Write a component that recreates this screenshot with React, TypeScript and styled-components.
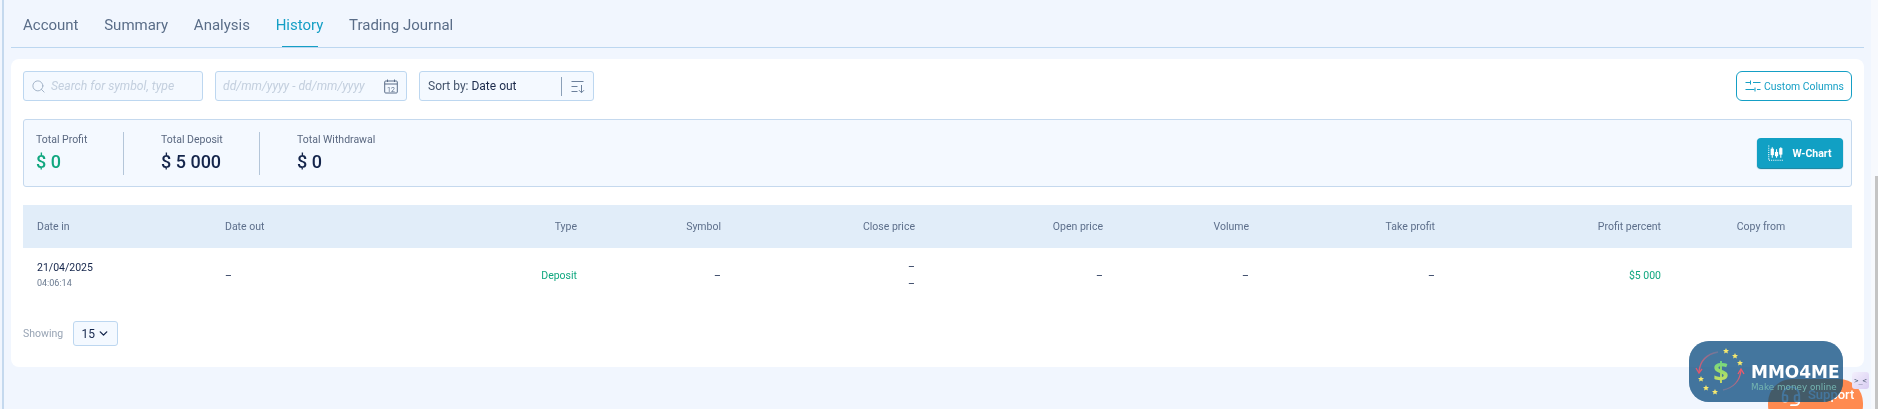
import React from "react";
import styled, { createGlobalStyle } from "styled-components";
import { Search, ChevronDown, Headset } from "lucide-react";

const GlobalStyle = createGlobalStyle`
  html, body {
    margin: 0;
    padding: 0;
    height: 409px;
    overflow: hidden;
    background: #f1f6fe;
    font-family: Roboto, "Liberation Sans", sans-serif;
  }
  * { box-sizing: border-box; }
`;

const Page = styled.div`
  position: relative;
  display: flex;
  width: 1878px;
  height: 409px;
  overflow: hidden;
  background: #f1f6fe;
`;

const LeftRail = styled.div`
  width: 2px;
  margin-left: 2px;
  background: #c5d9ee;
  flex: none;
`;

const Content = styled.div`
  width: 1853px;
  margin-left: 7px;
  flex: none;
`;

const Tabs = styled.nav`
  display: flex;
  gap: 25.7px;
  height: 48px;
  padding: 14px 0 0 12px;
  border-bottom: 1px solid #bdd7f0;
`;

const Tab = styled.div<{ $active?: boolean }>`
  position: relative;
  height: 33px;
  font-size: 15px;
  line-height: 22px;
  color: ${(p) => (p.$active ? "#159fc5" : "#5a6d88")};
  &::after {
    content: "";
    display: ${(p) => (p.$active ? "block" : "none")};
    position: absolute;
    left: 6px;
    right: 5px;
    bottom: 0;
    height: 1px;
    background: #159fc5;
  }
`;

const Card = styled.section`
  height: 308px;
  margin-top: 11px;
  padding: 12px 12px 0;
  background: #fff;
  border-radius: 8px;
`;

const Toolbar = styled.div`
  display: flex;
  gap: 12px;
  height: 30px;
`;

const Field = styled.div<{ $width: number }>`
  display: flex;
  align-items: center;
  width: ${(p) => p.$width}px;
  padding: 0 8px 0 7px;
  background: #f4f9ff;
  border: 1px solid #bdd7f0;
  border-radius: 3px;
  font-size: 12px;
`;

const Placeholder = styled.span`
  flex: 1;
  font-style: italic;
  font-size: 12.2px;
  color: #c3cfde;
  white-space: nowrap;
`;

const SortLabel = styled.span`
  flex: 1;
  padding-left: 1px;
  color: #44546c;
  b {
    font-weight: 400;
    color: #1b2a4b;
  }
`;

const SortDivider = styled.span`
  width: 1px;
  height: 19px;
  margin-right: 9px;
  background: #8ba0b8;
`;

const ColumnsButton = styled.button`
  display: flex;
  align-items: center;
  gap: 3px;
  margin-left: auto;
  width: 116px;
  padding: 0 0 0 8px;
  background: #fff;
  border: 1px solid #159fc5;
  border-radius: 6px;
  font: 400 10.4px Roboto, sans-serif;
  color: #159fc5;
  white-space: nowrap;
`;

const StatsBox = styled.div`
  display: flex;
  align-items: center;
  height: 68px;
  margin-top: 18px;
  padding: 0 8px 0 12px;
  background: #f4f9ff;
  border: 1px solid #c5d9ee;
  border-radius: 3px;
`;

const Stat = styled.div<{ $width: number; $divider?: boolean }>`
  width: ${(p) => p.$width}px;
  height: 43px;
  border-right: ${(p) => (p.$divider ? "1px solid #b4c6d9" : "none")};
  margin-right: ${(p) => (p.$divider ? "37px" : "0")};
`;

const StatLabel = styled.div`
  margin-top: 1px;
  font-size: 10.5px;
  line-height: 14px;
  color: #5a6880;
`;

const StatValue = styled.div<{ $green?: boolean }>`
  margin-top: 4px;
  font-size: 18px;
  line-height: 21px;
  font-weight: 500;
  color: ${(p) => (p.$green ? "#10a77f" : "#14254b")};
`;

const ChartButton = styled.button`
  display: flex;
  align-items: center;
  justify-content: center;
  gap: 8px;
  margin-left: auto;
  width: 86px;
  height: 30px;
  background: #11a0c4;
  border: none;
  border-radius: 4px;
  box-shadow: 0 1px 1px #0b7d9b;
  font: 700 10.5px Roboto, sans-serif;
  color: #fff;
`;

const TableGrid = styled.div`
  display: grid;
  grid-template-columns: 188px 188px 191px 144px 194px 188px 146px 186px 226px 178px;
  margin-top: 18px;
`;

const HeadCell = styled.div<{ $align?: string }>`
  display: flex;
  align-items: center;
  justify-content: ${(p) => p.$align || "flex-end"};
  height: 43px;
  padding: 0 ${(p) => (p.$align === "center" ? 18 : 13)}px 0 14px;
  background: #e1edf9;
  font-size: 10.5px;
  color: #5d6f8b;
`;

const BodyCell = styled.div<{ $align?: string; $green?: boolean }>`
  display: flex;
  flex-direction: column;
  align-items: ${(p) => p.$align || "flex-end"};
  justify-content: center;
  height: 54px;
  padding: 0 13px 0 14px;
  font-size: 10.5px;
  line-height: 17px;
  color: ${(p) => (p.$green ? "#10a77f" : "#14254b")};
`;

const RowTime = styled.span`
  font-size: 9px;
  line-height: 15px;
  color: #6a7a90;
`;

const Pager = styled.div`
  display: flex;
  align-items: center;
  gap: 10px;
  margin-top: 19px;
  font-size: 10.5px;
  color: #98a4b4;
`;

const PageSelect = styled.div`
  display: flex;
  align-items: center;
  justify-content: center;
  gap: 2px;
  width: 45px;
  height: 25px;
  background: #f4f9ff;
  border: 1px solid #bdd7f0;
  border-radius: 3px;
  font-size: 12px;
  color: #14254b;
`;

const ScrollTrack = styled.div`
  position: absolute;
  right: 0;
  top: 0;
  bottom: 0;
  width: 7px;
  background: #f7f9fd;
`;

const ScrollThumb = styled.div`
  position: absolute;
  right: 0;
  top: 176px;
  bottom: 0;
  width: 3px;
  background: #c4c4c4;
`;

const SupportButton = styled.div`
  position: absolute;
  left: 1768px;
  top: 379px;
  display: flex;
  align-items: flex-start;
  gap: 6px;
  width: 95px;
  height: 50px;
  padding: 6px 0 0 12px;
  background: #ff8a50;
  border-radius: 24px;
  font-size: 13px;
  line-height: 20px;
  font-weight: 500;
  color: #fff;
`;

const DevBadge = styled.div`
  position: absolute;
  left: 1852px;
  top: 372px;
  display: flex;
  align-items: center;
  justify-content: center;
  width: 17px;
  height: 17px;
  background: linear-gradient(135deg, #f3f0fc, #d9cdf3);
  border-radius: 3px;
  font: 7px "DejaVu Sans Mono", monospace;
  color: #44546c;
`;

/* multiply layer plus a flat layer: white below keeps the badge colour, the orange goes dark */
const LogoBadge = styled.div`
  position: absolute;
  left: 1689px;
  top: 341px;
  display: flex;
  align-items: center;
  gap: 6px;
  width: 154px;
  height: 61px;
  padding-left: 6px;
  border-radius: 20px;
  &::before,
  &::after {
    content: "";
    position: absolute;
    inset: 0;
    border-radius: 20px;
    background: #44769e;
  }
  &::before {
    mix-blend-mode: multiply;
  }
  &::after {
    opacity: 0.5;
  }
  > * {
    position: relative;
    z-index: 1;
  }
`;

const LogoText = styled.div`
  margin-top: 13px;
  font-family: "DejaVu Sans", sans-serif;
`;

const LogoTitle = styled.div`
  font-size: 17px;
  line-height: 17px;
  font-weight: 700;
  color: #fff;
`;

const LogoSub = styled.div`
  margin-top: 1px;
  font-size: 8.8px;
  line-height: 11px;
  color: #74b5b0;
  white-space: nowrap;
`;

const CalendarIcon = () => (
  <svg width="14" height="15" viewBox="0 0 14 15" fill="none" stroke="#5a6d88">
    <rect x="0.7" y="2" width="12.6" height="12" rx="1" />
    <path d="M0.7 5h12.6M3.5 0.5v2.5M10.5 0.5v2.5" />
    <text x="7" y="12.5" fontSize="7" textAnchor="middle" fill="#5a6d88" stroke="none" fontFamily="Roboto">12</text>
  </svg>
);

const SortIcon = () => (
  <svg width="14" height="13" viewBox="0 0 14 13" fill="none" stroke="#6c809b">
    <path d="M0.5 1.5h12M0.5 6.5h6M0.5 11.5h6M10.5 5v7.5M8 10.2l2.5 2.5 2.5-2.5" />
  </svg>
);

const SlidersIcon = () => (
  <svg width="16" height="12" viewBox="0 0 16 12" fill="none" stroke="#159fc5">
    <path d="M0.5 2.5h5M8 2.5h7.5M5.5 0.5v4M0.5 9.5h9M12 9.5h3.5M10 7.5v4" />
  </svg>
);

const ChartIcon = () => (
  <svg width="16" height="16" viewBox="0 0 15 15" fill="none" stroke="#fff">
    <path d="M0.7 0.5v13.8h14" strokeDasharray="1 1" />
    <path d="M4 2v10M8 4v8M12 2v10" />
    <rect x="3" y="4" width="2" height="5" fill="#fff" />
    <rect x="7" y="7" width="2" height="3" fill="#fff" />
    <rect x="11" y="3.5" width="2" height="5" fill="#fff" />
  </svg>
);

const stars = [
  [31, 4],
  [40, 9],
  [45, 16],
  [6, 32],
  [11, 41],
  [20, 45],
];

const LogoMark = () => (
  <svg width="50" height="50" viewBox="0 0 50 50" fill="none">
    <defs>
      <linearGradient id="dollar" x1="0" y1="0" x2="0" y2="1">
        <stop offset="0" stopColor="#46d494" />
        <stop offset="0.55" stopColor="#9fdc6a" />
        <stop offset="1" stopColor="#efe35a" />
      </linearGradient>
      <linearGradient id="arcLeft" x1="1" y1="0" x2="0" y2="1">
        <stop offset="0" stopColor="#6a7a9c" />
        <stop offset="1" stopColor="#e0586e" />
      </linearGradient>
      <linearGradient id="arcRight" x1="0" y1="1" x2="1" y2="0">
        <stop offset="0" stopColor="#6a7a9c" />
        <stop offset="1" stopColor="#f05a6a" />
      </linearGradient>
    </defs>
    <path d="M23 5C12 7 5 14 4 25" stroke="url(#arcLeft)" strokeWidth="1.3" />
    <path d="M1 21l3 5 3-4" stroke="#e0586e" strokeWidth="1.3" />
    <path d="M28 43c10-2 17-9 18-20" stroke="url(#arcRight)" strokeWidth="1.3" />
    <path d="M43 27l3-5 3 5" stroke="#f05a6a" strokeWidth="1.3" />
    <text x="26" y="34" fontSize="27" fontWeight="700" textAnchor="middle" fill="url(#dollar)" fontFamily="Open Sans">$</text>
    {stars.map(([x, y]) => (
      <polygon
        key={`${x}-${y}`}
        transform={`translate(${x} ${y})`}
        points="0,-3 0.9,-1 3,-0.9 1.4,0.5 1.9,2.6 0,1.5 -1.9,2.6 -1.4,0.5 -3,-0.9 -0.9,-1"
        fill="#f6e86e"
      />
    ))}
  </svg>
);

const tabs = ["Account", "Summary", "Analysis", "History", "Trading Journal"];

const headers: { label: string; align?: string }[] = [
  { label: "Date in", align: "flex-start" },
  { label: "Date out", align: "flex-start" },
  { label: "Type" },
  { label: "Symbol" },
  { label: "Close price" },
  { label: "Open price" },
  { label: "Volume" },
  { label: "Take profit" },
  { label: "Profit percent" },
  { label: "Copy from", align: "center" },
];

export default function App() {
  return (
    <Page>
      <GlobalStyle />
      <LeftRail />
      <Content>
        <Tabs>
          {tabs.map((t) => (
            <Tab key={t} $active={t === "History"}>
              {t}
            </Tab>
          ))}
        </Tabs>
        <Card>
          <Toolbar>
            <Field $width={180}>
              <Search size={15} color="#9fb0c4" strokeWidth={1.5} style={{ marginRight: 5 }} />
              <Placeholder>Search for symbol, type</Placeholder>
            </Field>
            <Field $width={192}>
              <Placeholder>dd/mm/yyyy - dd/mm/yyyy</Placeholder>
              <CalendarIcon />
            </Field>
            <Field $width={175}>
              <SortLabel>
                Sort by: <b>Date out</b>
              </SortLabel>
              <SortDivider />
              <SortIcon />
            </Field>
            <ColumnsButton>
              <SlidersIcon />
              Custom Columns
            </ColumnsButton>
          </Toolbar>
          <StatsBox>
            <Stat $width={88} $divider>
              <StatLabel>Total Profit</StatLabel>
              <StatValue $green>$ 0</StatValue>
            </Stat>
            <Stat $width={99} $divider>
              <StatLabel>Total Deposit</StatLabel>
              <StatValue>$ 5 000</StatValue>
            </Stat>
            <Stat $width={120}>
              <StatLabel>Total Withdrawal</StatLabel>
              <StatValue>$ 0</StatValue>
            </Stat>
            <ChartButton>
              <ChartIcon />
              W-Chart
            </ChartButton>
          </StatsBox>
          <TableGrid>
            {headers.map((h) => (
              <HeadCell key={h.label} $align={h.align}>
                {h.label}
              </HeadCell>
            ))}
            <BodyCell $align="flex-start">
              21/04/2025
              <RowTime>04:06:14</RowTime>
            </BodyCell>
            <BodyCell $align="flex-start">–</BodyCell>
            <BodyCell $green>Deposit</BodyCell>
            <BodyCell>–</BodyCell>
            <BodyCell>
              <span>–</span>
              <span>–</span>
            </BodyCell>
            <BodyCell>–</BodyCell>
            <BodyCell>–</BodyCell>
            <BodyCell>–</BodyCell>
            <BodyCell $green>$5 000</BodyCell>
            <BodyCell />
          </TableGrid>
          <Pager>
            Showing
            <PageSelect>
              15
              <ChevronDown size={13} strokeWidth={2.5} />
            </PageSelect>
          </Pager>
        </Card>
      </Content>
      <ScrollTrack />
      <ScrollThumb />
      <SupportButton>
        <Headset size={22} strokeWidth={2} />
        Support
      </SupportButton>
      <DevBadge>&gt;_&lt;</DevBadge>
      <LogoBadge>
        <LogoMark />
        <LogoText>
          <LogoTitle>MMO4ME</LogoTitle>
          <LogoSub>Make money online</LogoSub>
        </LogoText>
      </LogoBadge>
    </Page>
  );
}
